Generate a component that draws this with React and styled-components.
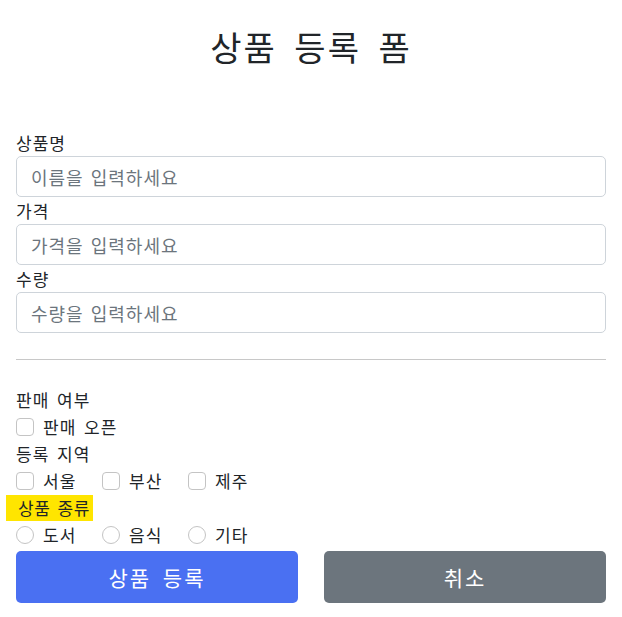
import React from "react";
import styled, { createGlobalStyle } from "styled-components";

const GlobalStyle = createGlobalStyle`
  body {
    margin: 0;
    background: #ffffff;
    font-family: "Noto Sans CJK KR", "Noto Sans", sans-serif;
    color: #212529;
  }
`;

const Page = styled.form`
  padding: 0 16px;
  display: flex;
  flex-direction: column;
`;

const Title = styled.h2`
  margin: 0;
  padding: 23px 0 0;
  height: 129px;
  box-sizing: border-box;
  text-align: center;
  font-size: 34px;
  font-weight: 400;
  line-height: 48px;
  letter-spacing: 2px;
  word-spacing: 8px;
`;

const Label = styled.label`
  display: block;
  font-size: 17px;
  line-height: 27px;
  height: 27px;
  letter-spacing: 1px;
  word-spacing: 3px;
`;

const Input = styled.input`
  box-sizing: border-box;
  width: 100%;
  height: 41px;
  padding: 0 14px;
  font-family: inherit;
  font-size: 18px;
  letter-spacing: 1px;
  word-spacing: 2px;
  border: 1px solid #ced4da;
  border-radius: 5px;
  outline: none;
  &::placeholder {
    color: #6c757d;
  }
`;

const Divider = styled.hr`
  width: 100%;
  margin: 26px 0 26px;
  border: 0;
  border-top: 1px solid #c8c8c8;
`;

const Options = styled.div`
  display: flex;
  height: 27px;
  align-items: center;
`;

const Option = styled.label`
  display: flex;
  align-items: center;
  flex-shrink: 0;
  width: 86px;
  white-space: nowrap;
  font-size: 17px;
  line-height: 27px;
  letter-spacing: 1px;
  word-spacing: 3px;
`;

const Box = styled.span`
  box-sizing: border-box;
  flex-shrink: 0;
  width: 18px;
  height: 18px;
  margin-right: 9px;
  border: 1px solid #c4c4c4;
  border-radius: ${(p) => (p.round ? "50%" : "4px")};
  background: #fff;
`;

const Marked = styled.span`
  display: inline-block;
  margin-left: -10px;
  padding: 0 3px 0 12px;
  height: 26px;
  line-height: 26px;
  letter-spacing: 0.5px;
  background: #ffe500;
`;

const Actions = styled.div`
  display: grid;
  grid-template-columns: 1fr 1fr;
  column-gap: 26px;
  margin-top: 3px;
`;

const Button = styled.button`
  height: 52px;
  border: 0;
  border-radius: 5px;
  color: #ffffff;
  font-family: inherit;
  font-size: 21px;
  letter-spacing: 2px;
  word-spacing: 5px;
  background: ${(p) => (p.secondary ? "#6c757d" : "#4a70f2")};
`;

const fields = [
  { label: "상품명", placeholder: "이름을 입력하세요" },
  { label: "가격", placeholder: "가격을 입력하세요" },
  { label: "수량", placeholder: "수량을 입력하세요" }
];

export default function App() {
  return (
    <>
      <GlobalStyle />
      <Page onSubmit={(e) => e.preventDefault()}>
        <Title>상품 등록 폼</Title>
        {fields.map((f) => (
          <div key={f.label}>
            <Label>{f.label}</Label>
            <Input placeholder={f.placeholder} />
          </div>
        ))}
        <Divider />
        <Label>판매 여부</Label>
        <Options>
          <Option>
            <Box />판매 오픈
          </Option>
        </Options>
        <Label>등록 지역</Label>
        <Options>
          {["서울", "부산", "제주"].map((r) => (
            <Option key={r}>
              <Box />
              {r}
            </Option>
          ))}
        </Options>
        <Label>
          <Marked>상품 종류</Marked>
        </Label>
        <Options>
          {["도서", "음식", "기타"].map((r) => (
            <Option key={r}>
              <Box round />
              {r}
            </Option>
          ))}
        </Options>
        <Actions>
          <Button type="submit">상품 등록</Button>
          <Button type="button" secondary>
            취소
          </Button>
        </Actions>
      </Page>
    </>
  );
}
